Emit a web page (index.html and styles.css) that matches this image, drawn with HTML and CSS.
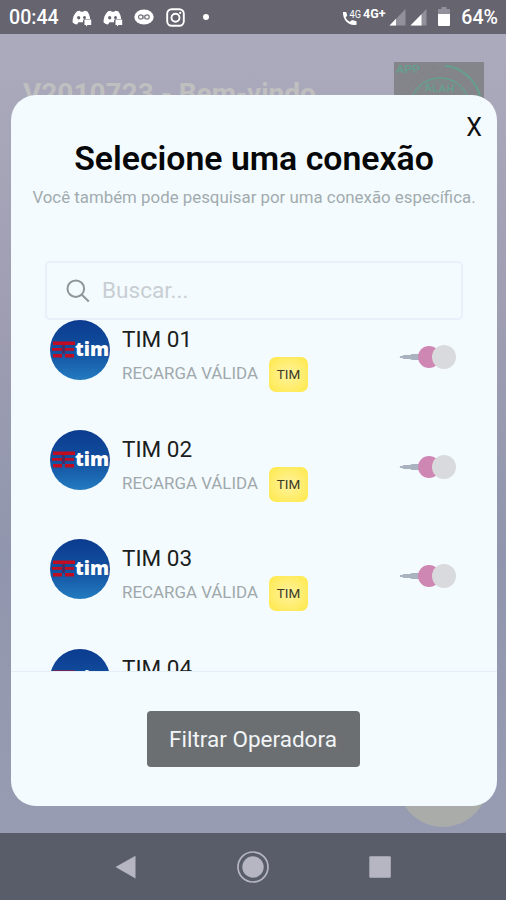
FILE: index.html
```html
<!DOCTYPE html>
<html lang="pt-BR">
<head>
    <meta charset="UTF-8">
    <meta name="viewport" content="width=device-width, initial-scale=1.0">
    <title>Selecione uma conexão</title>
    <link rel="stylesheet" href="styles.css">
</head>
<body>
    <!-- icones reutilizados -->
    <svg class="defs" width="0" height="0">
        <defs>
            <linearGradient id="azul" x1="0" y1="0" x2="0" y2="1">
                <stop offset="0" stop-color="#0b3b8f"/>
                <stop offset="0.5" stop-color="#124f9f"/>
                <stop offset="1" stop-color="#237bc0"/>
            </linearGradient>
            <symbol id="logo-tim" viewBox="0 0 60 60">
                <circle cx="30" cy="30" r="30" fill="url(#azul)"/>
                <path d="M3 21.500h22v3.500H3zM2 28h10v2.800H2zM15 28h9v2.800h-9zM3 34h9v3.500H3zM15 34h9v3.500h-9z" fill="#c00d22"/>
                <path d="M12 25h3v9h-3z" fill="#4c2a60"/>
                <text class="logo-text" x="25" y="36.400" textLength="34" lengthAdjust="spacingAndGlyphs">tim</text>
            </symbol>
            <symbol id="discord" viewBox="0 0 20 17">
                <path d="M5 1.200 8 .700l.700 1.100h2.600L12 .700l3.200.600c1.800 2.300 2.700 4.800 2.900 7.600H12l-1 1.600v1.700H6.500L5 14.500C3 14.200 1.500 13.500.500 12.200.500 8 1.800 4.200 5 1.200z" fill="#fff"/>
                <ellipse cx="6.700" cy="7.800" rx="1.600" ry="1.700" fill="#65646f"/>
                <ellipse cx="12.500" cy="7.500" rx="1.500" ry="1.500" fill="#65646f"/>
                <path d="M12.500 9.500h6.700v5.500h-3.600l-1.600 1.600V15h-1.500z" fill="#fff"/>
            </symbol>
        </defs>
    </svg>

    <div class="phone">
        <header class="status-bar">
            <span class="time">00:44</span>
            <svg class="ic-discord" width="20" height="17"><use href="#discord"/></svg>
            <svg class="ic-discord" width="20" height="17"><use href="#discord"/></svg>
            <svg class="ic-badge" width="20" height="16" viewBox="0 0 20 16">
                <ellipse cx="10" cy="8" rx="9.700" ry="7.500" fill="#fff"/>
                <circle cx="6.700" cy="8" r="2.200" fill="none" stroke="#77767f" stroke-width="1.200"/>
                <circle cx="13" cy="8" r="2.200" fill="none" stroke="#77767f" stroke-width="1.200"/>
                <path d="M10 6v4" stroke="#77767f"/>
            </svg>
            <svg class="ic-insta" width="19" height="19" viewBox="0 0 19 19" fill="none" stroke="#fff">
                <rect x="1.200" y="1.200" width="16.600" height="16.600" rx="4.500" stroke-width="1.900"/>
                <circle cx="9.500" cy="9.700" r="4" stroke-width="1.900"/>
                <circle cx="14.200" cy="4.900" r="1.100" fill="#fff" stroke="none"/>
            </svg>
            <span class="dot"></span>

            <div class="status-right">
                <svg width="46" height="22" viewBox="0 0 46 22">
                    <path d="M3 6h3.200l1 3.500-1.500 1.900c1 2.200 2.300 3.400 4.300 4.300l2-1.700 4.500 1.200v3.600C9 20.500 2.500 14 3 6z" fill="#fff"/>
                    <text class="net-small" x="9.500" y="12" textLength="11.500" lengthAdjust="spacingAndGlyphs">4G</text>
                    <text class="net" x="23" y="11.700" textLength="22.500" lengthAdjust="spacingAndGlyphs">4G+</text>
                </svg>
                <svg class="ic-signal" width="17" height="18" viewBox="0 0 17 18">
                    <path d="M16.500 1v16.500H.500z" fill="#92919b"/>
                    <path d="M7 10.800v6.700H.500z" fill="#fff"/>
                </svg>
                <svg class="ic-signal" width="17" height="18" viewBox="0 0 17 18">
                    <path d="M16.500 1v16.500H.500z" fill="#92919b"/>
                    <path d="M11.500 6.200v11.300H.500z" fill="#fff"/>
                </svg>
                <svg class="ic-battery" width="12" height="19" viewBox="0 0 12 19">
                    <path d="M3.500 0h5v2H12v6H0V2h3.500z" fill="#92919b"/>
                    <path d="M0 7h12v11a1 1 0 0 1-1 1H1a1 1 0 0 1-1-1z" fill="#fff"/>
                </svg>
                <span class="percent">64%</span>
            </div>
        </header>

        <main class="app">
            <div class="app-header">
                <h1>V2010723 - Bem-vindo</h1>
                <svg class="app-logo" width="90" height="60" viewBox="0 0 90 60">
                    <rect width="90" height="60" fill="#84858a"/>
                    <text class="app-tag" x="2" y="10.500" textLength="24" lengthAdjust="spacingAndGlyphs">APP</text>
                    <g fill="none" stroke="#65a08e">
                        <circle cx="46" cy="46" r="30" stroke-width="1.300"/>
                        <circle cx="46" cy="46" r="27" stroke="#759289"/>
                        <path d="M51 3.500A42 42 0 0 1 86 34" stroke-width="2"/>
                        <path d="M14 24A40 40 0 0 1 44 6" stroke="#77827f" stroke-dasharray="2 4"/>
                    </g>
                    <text class="app-name" x="31" y="30" textLength="29" rotate="-10 -4 0 6">ALAH</text>
                </svg>
            </div>
            <span class="fab"></span>

            <div class="modal">
                <button class="close">X</button>
                <div class="modal-header">
                    <h2>Selecione uma conexão</h2>
                    <p>Você também pode pesquisar por uma conexão específica.</p>
                </div>
                <label class="search">
                    <svg width="24" height="24" viewBox="0 0 24 24" fill="none" stroke="#8d9699" stroke-width="2">
                        <circle cx="9.800" cy="9.700" r="8.300"/>
                        <path d="m15.800 15.700 7 6.800"/>
                    </svg>
                    <input type="text" placeholder="Buscar...">
                </label>
                <ul class="list">
                    <li class="item">
                        <svg class="avatar" width="60" height="60"><use href="#logo-tim"/></svg>
                        <div class="info">
                            <h3>TIM 01</h3>
                            <p>RECARGA VÁLIDA <span class="tag">TIM</span></p>
                        </div>
                        <span class="toggle"></span>
                    </li>
                    <li class="item">
                        <svg class="avatar" width="60" height="60"><use href="#logo-tim"/></svg>
                        <div class="info">
                            <h3>TIM 02</h3>
                            <p>RECARGA VÁLIDA <span class="tag">TIM</span></p>
                        </div>
                        <span class="toggle"></span>
                    </li>
                    <li class="item">
                        <svg class="avatar" width="60" height="60"><use href="#logo-tim"/></svg>
                        <div class="info">
                            <h3>TIM 03</h3>
                            <p>RECARGA VÁLIDA <span class="tag">TIM</span></p>
                        </div>
                        <span class="toggle"></span>
                    </li>
                    <li class="item">
                        <svg class="avatar" width="60" height="60"><use href="#logo-tim"/></svg>
                        <div class="info">
                            <h3>TIM 04</h3>
                        </div>
                    </li>
                </ul>
                <div class="modal-footer">
                    <button class="btn">Filtrar Operadora</button>
                </div>
            </div>
        </main>

        <nav class="nav-bar">
            <svg width="32" height="32" viewBox="0 0 32 32"><path d="M5.500 16 25.500 4.800v22.700z" fill="#b6b6c3"/></svg>
            <svg width="32" height="32" viewBox="0 0 32 32">
                <circle cx="16" cy="16" r="15" fill="none" stroke="#b6b6c3" stroke-width="1.700"/>
                <circle cx="16" cy="16" r="10.700" fill="#b6b6c3"/>
            </svg>
            <svg width="32" height="32" viewBox="0 0 32 32"><rect x="5.300" y="5.300" width="21.500" height="21.500" rx="1" fill="#b6b6c3"/></svg>
        </nav>
    </div>
</body>
</html>
```

FILE: styles.css
```css
* {
    box-sizing: border-box;
}
body {
    margin: 0;
    font-family: Roboto, "Liberation Sans", sans-serif;
}
h1, h2, h3, p, ul {
    margin: 0;
    padding: 0;
}
.defs {
    position: absolute;
}
.phone {
    display: flex;
    flex-direction: column;
    width: 506px;
    height: 900px;
    overflow: hidden;
}

/* barra de status */
.status-bar {
    display: flex;
    align-items: center;
    height: 34px;
    padding: 0 8px 0 9px;
    background: #65646f;
    color: #fff;
}
.time {
    width: 63px;
    padding-top: 2px;
    font-size: 19.6px;
    font-weight: 500;
    line-height: 36px;
}
.ic-discord {
    margin: 2px 11px 0 0;
}
.ic-badge {
    margin-right: 12px;
}
.dot {
    width: 6px;
    height: 6px;
    margin-left: 18px;
    border-radius: 50%;
    background: #fff;
}
.status-right {
    display: flex;
    align-items: center;
    margin-left: auto;
}
.net, .net-small {
    font-size: 12px;
    font-weight: 700;
    fill: #fff;
}
.net-small {
    font-size: 11px;
    font-weight: 400;
}
.ic-signal {
    margin-left: 3px;
}
.ic-signal + .ic-signal {
    margin-left: 4px;
}
.ic-battery {
    margin: 0 11px 2px 11px;
}
.percent {
    padding-top: 2px;
    font-size: 19.6px;
    font-weight: 500;
    line-height: 36px;
}

/* fundo */
.app {
    position: relative;
    flex: 1;
    background: linear-gradient(#acabbd, #a19fb3 30%, #9096ad 65%, #989cb2);
}
.app-header {
    display: flex;
    justify-content: space-between;
    padding: 28px 22px 0 23px;
}
.app-header h1 {
    margin-top: 16px;
    font-size: 28px;
    font-weight: 700;
    line-height: 32px;
    color: #bfbfc0;
}
.app-tag, .app-name {
    font-size: 11px;
    font-weight: 500;
    fill: #65a08e;
}
.fab {
    position: absolute;
    right: 18px;
    bottom: 6px;
    width: 90px;
    height: 90px;
    border-radius: 50%;
    background: #a9aca9;
}

/* modal */
.modal {
    position: absolute;
    top: 61px;
    left: 11px;
    display: flex;
    flex-direction: column;
    width: 486px;
    height: 711px;
    border-radius: 25px;
    background: #f3fbff;
    overflow: hidden;
}
.close {
    position: absolute;
    top: 17px;
    right: 15px;
    padding: 0;
    border: 0;
    background: none;
    font-family: inherit;
    font-size: 25px;
    line-height: 32px;
    color: #111;
}
.modal-header {
    height: 166px;
    padding-top: 43px;
    text-align: center;
    white-space: nowrap;
}
.modal-header h2 {
    font-size: 33.8px;
    font-weight: 600;
    line-height: 42px;
    color: #050708;
}
.modal-header p {
    margin-top: 6px;
    font-size: 16.85px;
    line-height: 22px;
    color: #a2abae;
}
.search {
    display: flex;
    align-items: center;
    height: 59px;
    margin: 0 34px;
    padding-left: 19px;
    border: 2px solid #e9effb;
    border-radius: 5px;
}
.search input {
    width: 300px;
    margin-left: 12px;
    padding: 0;
    border: 0;
    outline: none;
    background: none;
    font-family: inherit;
    font-size: 22.6px;
}
.search input::placeholder {
    color: #c9ced3;
}
.list {
    height: 351px;
    padding: 0 41px 0 39px;
    list-style: none;
    overflow: hidden;
}
.item {
    display: flex;
    height: 109.7px;
}
.logo-text {
    font-family: "Open Sans", sans-serif;
    font-size: 20px;
    font-weight: 800;
    fill: #fff;
}
.info {
    margin-left: 12px;
}
.info h3 {
    margin: 4px 0 2px;
    font-size: 22.5px;
    font-weight: 400;
    line-height: 30px;
    color: #1b1e20;
}
.info p {
    display: flex;
    font-size: 16.9px;
    line-height: 34px;
    color: #a0a8ab;
}
.tag {
    width: 39px;
    height: 35px;
    margin: 1px 0 0 11px;
    border-radius: 7px;
    background: radial-gradient(#fff3a0, #ffe94f 90%);
    font-size: 13.5px;
    line-height: 34px;
    text-align: center;
    color: #3b3a25;
}
.toggle {
    position: relative;
    width: 57px;
    height: 24px;
    margin: 25px 0 0 auto;
    background: radial-gradient(ellipse 24px 3px at 24px 12px, #a8b3bf 95%, transparent);
}
.toggle::before,
.toggle::after {
    content: "";
    position: absolute;
    border-radius: 50%;
}
.toggle::before {
    top: 1px;
    left: 19px;
    width: 22px;
    height: 22px;
    background: #ce87b3;
}
.toggle::after {
    top: 0;
    right: 0;
    width: 24px;
    height: 24px;
    background: #d9dadd;
}
.modal-footer {
    flex: 1;
    padding: 39px 2px 0 0;
    border-top: 1px solid #e3eef7;
    text-align: center;
}
.btn {
    width: 213px;
    height: 56px;
    padding: 0;
    border: 0;
    border-radius: 4px;
    background: #6b6f72;
    font-family: inherit;
    font-size: 22.5px;
    color: #f2f5f7;
}

/* barra de navegacao */
.nav-bar {
    display: flex;
    align-items: center;
    justify-content: center;
    gap: 95px;
    height: 67px;
    background: #595d69;
}
```
